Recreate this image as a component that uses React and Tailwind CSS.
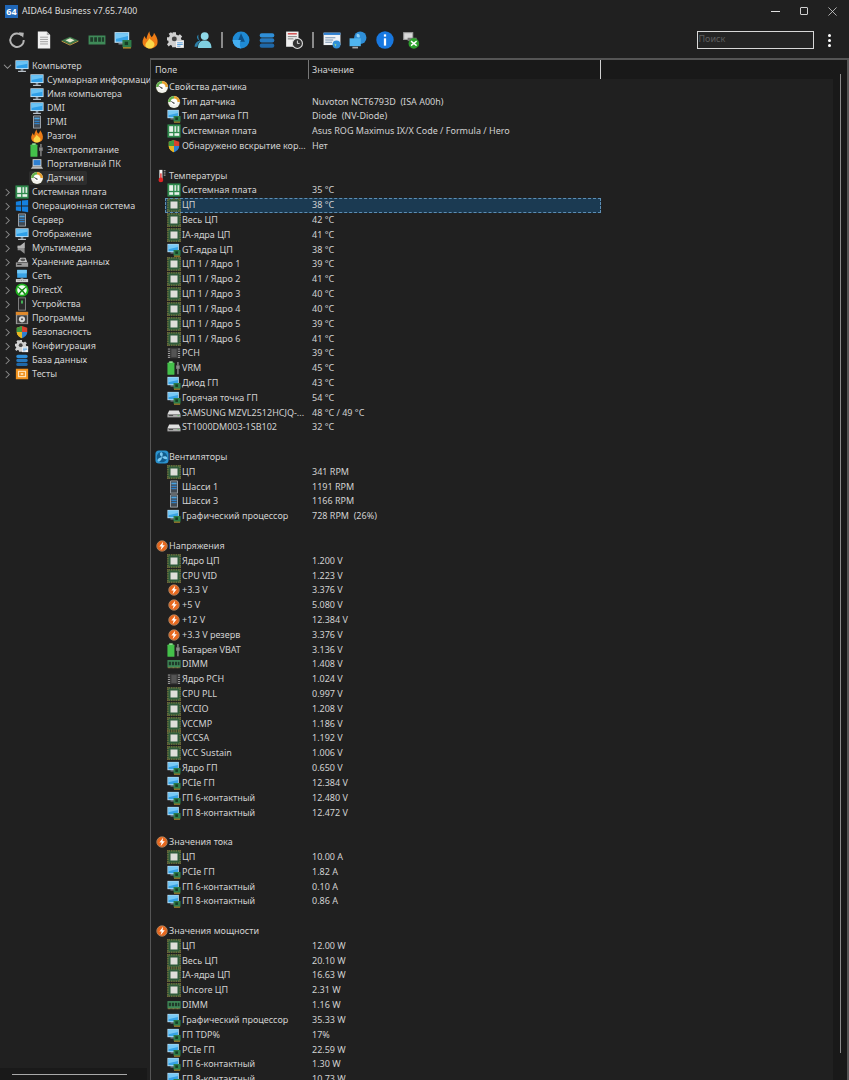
import React from "react";

const S = ({ children, s = 14, className = "" }) => (
  <svg viewBox="0 0 16 16" width={s} height={s} className={`shrink-0 ${className}`}>{children}</svg>
);

const Monitor = ({ s }) => (
  <S s={s}>
    <rect x="0.5" y="1.5" width="15" height="10" fill="#cfe8f8" />
    <rect x="1.5" y="2.5" width="13" height="8" fill="#2f9fe8" />
    <path d="M1.5 2.5h13v3L1.5 8z" fill="#6cc4f5" />
    <rect x="6.5" y="11.5" width="3" height="2" fill="#8a97a3" />
    <rect x="3.5" y="13.5" width="9" height="1.3" fill="#c4ccd4" />
  </S>
);
const Chip = ({ s }) => (
  <S s={s}>
    <rect x="0.500" y="0.500" width="15" height="15" fill="#2f5a3a" />
    <path d="M.5 1h15M.5 15h15M1 .5v15M15 .5v15" stroke="#b89a48" strokeWidth="1" strokeDasharray="1 1" />
    <rect x="4" y="4" width="8" height="8" fill="#dededa" />
  </S>
);
const Mobo = ({ s }) => (
  <S s={s}>
    <rect x="0.500" y="0.500" width="15" height="15" fill="#2f8a4d" />
    <rect x="2.500" y="2.500" width="4.500" height="6.500" fill="#e9f1ea" />
    <rect x="8.500" y="2.500" width="2" height="6.500" fill="#d8e8dc" />
    <rect x="12" y="2.500" width="2" height="6.500" fill="#d8e8dc" />
    <rect x="2.500" y="10.500" width="4.500" height="3" fill="#e9f1ea" />
    <rect x="8.500" y="10.500" width="5.500" height="3" fill="#e9f1ea" />
  </S>
);
const Gpu = ({ s }) => (
  <S s={s}>
    <rect x="0.5" y="1" width="13" height="9.5" fill="#bfe3f8" />
    <rect x="1.5" y="2" width="11" height="7.5" fill="#37a3e6" />
    <path d="M1.500 2h11v2.500L1.500 7z" fill="#78c9f5" />
    <rect x="4" y="10.5" width="5" height="1.5" fill="#7d8a96" />
    <rect x="7.5" y="8" width="8" height="6.5" fill="#2e7d4a" />
    <rect x="9.5" y="9.5" width="3" height="3" fill="#173d25" />
    <rect x="8" y="14.5" width="7" height="1" fill="#d5a92e" />
  </S>
);
const Gauge = ({ s }) => (
  <S s={s}>
    <circle cx="8" cy="8" r="7.500" fill="#3a3a2c" />
    <circle cx="8" cy="8" r="6.800" fill="#f2f2ec" />
    <path d="M8 1.200A6.800 6.800 0 0 1 14.800 8H12A4 4 0 0 0 8 4z" fill="#e9a02c" />
    <path d="M1.200 8A6.800 6.800 0 0 1 8 1.200V4A4 4 0 0 0 4 8z" fill="#63b04a" />
    <circle cx="8" cy="8" r="3.400" fill="#fff" />
    <path d="M3 6l6 3.200-1 1.200z" fill="#333" />
  </S>
);
const Shield = ({ s }) => (
  <S s={s}>
    <path d="M8 1L2 3v5c0 3.500 3 6 6 7z" fill="#e8a820" />
    <path d="M8 1l6 2v5H8z" fill="#d9412e" />
    <path d="M2 3l6-2v7H2z" fill="#3f9a45" />
    <path d="M8 8h6c0 3.500-3 6-6 7z" fill="#2f7fd0" />
    <path d="M2 8h6v7c-3-1-6-3.500-6-7z" fill="#e8b824" />
  </S>
);
const Thermo = ({ s }) => (
  <S s={s}>
    <rect x="5" y="1" width="3.500" height="10.500" fill="#f4f4f4" />
    <rect x="6" y="5" width="1.500" height="7" fill="#e02424" />
    <circle cx="6.700" cy="12.500" r="2.700" fill="#e02424" />
    <path d="M10 2h2M10 4.500h2M10 7h2" stroke="#ddd" strokeWidth="0.900" />
  </S>
);
const Fan = ({ s }) => (
  <S s={s}>
    <rect x="0.500" y="0.500" width="15" height="15" rx="4" fill="#2b93cf" />
    <circle cx="8" cy="8" r="6" fill="#125c8c" />
    <path d="M8 8C5 6 5 3 7 2.500 9 2.500 9.500 5 8 8zM8 8c3-1.500 5.500-1 6 1 0 2-3 2.500-6-1zM8 8c0 3-2 5.500-4 5-2-1-1-4 4-5z" fill="#7cc8f0" />
  </S>
);
const Bolt = ({ s }) => (
  <S s={s}>
    <circle cx="8" cy="8" r="5.600" fill="#e8681e" />
    <circle cx="8" cy="8" r="6" fill="none" stroke="#f4b07a" strokeWidth="0.700" />
    <path d="M9.300 3.200L5 8.500h2.600L6.400 12.800l4.800-5.600H8.600z" fill="#fff" />
  </S>
);
const Battery = ({ s }) => (
  <S s={s}>
    <rect x="0.500" y="1.800" width="8" height="14" rx="0.800" fill="#44c04a" />
    <rect x="2.500" y="0.300" width="4" height="2" fill="#8fd98f" />
    <path d="M12.500 1v4M12.500 9v6" stroke="#9a9a9a" strokeWidth="1.400" />
    <rect x="10.500" y="5" width="4" height="4" fill="#8a8a8a" />
  </S>
);
const Dimm = ({ s }) => (
  <S s={s}>
    <rect x="0.500" y="3.500" width="15" height="8.500" fill="#3f8a58" />
    <path d="M2 5.500h2.500v4H2zM5.500 5.500H8v4H5.500zM9 5.500h2.500v4H9zM12.300 5.500h2v4h-2z" fill="#1f3a2a" />
    <path d="M1 12.300h14" stroke="#d0b050" strokeWidth="0.800" strokeDasharray="1 0.500" />
  </S>
);
const Pch = ({ s }) => (
  <S s={s}>
    <rect x="3.500" y="2" width="9" height="12" fill="#3a3a3a" />
    <path d="M1 3.500h2.500M1 6h2.500M1 8.500h2.500M1 11h2.500M1 13h2.500M12.500 3.500H15M12.500 6H15M12.500 8.500H15M12.500 11H15M12.500 13H15" stroke="#bdbdbd" strokeWidth="1" />
    <rect x="5" y="3.500" width="6" height="9" fill="#545454" />
  </S>
);
const Hdd = ({ s }) => (
  <S s={s}>
    <path d="M2.500 5h11L15.500 9.500H.5z" fill="#e0e0e0" />
    <rect x="0.500" y="9.500" width="15" height="3.500" fill="#a8a8a8" />
    <rect x="2" y="10.500" width="5" height="1" fill="#3c3c3c" />
    <rect x="12" y="10.500" width="2" height="1" fill="#5fc060" />
  </S>
);
const Case = ({ s, blue = true }) => (
  <S s={s}>
    <rect x="3.500" y="0.500" width="9" height="15" rx="1" fill="#a7b0b8" />
    <rect x="4.500" y="1.500" width="7" height="13" fill="#434a52" />
    <rect x="5" y="3" width="6" height="2" fill={blue ? "#4ba3e0" : "#bbb"} />
    <rect x="5" y="6.500" width="6" height="1.500" fill={blue ? "#2f80c8" : "#888"} />
    <rect x="5" y="9" width="6" height="1.500" fill={blue ? "#2f80c8" : "#888"} />
  </S>
);
const Flame = ({ s }) => (
  <S s={s}>
    <path d="M8 15.500C3.500 15.500 .8 12.500 1.500 8.500 2 7 2.500 6 3 4.500c.8 1.200 1 2.200 1.800 2.800C5.200 5 6 2.500 7.500.3c0 2.500 1 4 2 5.200C10.500 4.500 11.500 3 11.500 1.500 13.800 4.500 15.500 8 14.500 11.500c-.7 2.300-3.500 4-6.500 4z" fill="#ee7d16" />
    <path d="M8 15.500c-2.800 0-4.500-1.500-4-3.800C4.500 10 6.500 9 7.500 6.500c1 1.700 4.500 3 4.500 5.500 0 2-2 3.500-4 3.500z" fill="#fbd84a" />
  </S>
);
const Speaker = ({ s }) => (
  <S s={s}>
    <path d="M3 5.500h3L11 1.500v13L6 10.500H3z" fill="#8f8f8f" />
    <path d="M6 5.500L11 1.500v6.500H3V5.500z" fill="#b4b4b4" />
  </S>
);
const Storage = ({ s }) => (
  <S s={s}>
    <path d="M3 8L6 3h6l2 5z" fill="#c8c8c8" />
    <ellipse cx="9" cy="5.500" rx="3" ry="1.500" fill="#5a5a5a" />
    <rect x="1" y="8.500" width="14" height="5" fill="#9a9a9a" />
    <rect x="2.500" y="10" width="5" height="1.500" fill="#333" />
  </S>
);
const Net = ({ s }) => (
  <S s={s}>
    <rect x="2.500" y="1" width="11" height="9" fill="#3aa3e6" />
    <path d="M2.500 1h11v4h-11z" fill="#75c8f5" />
    <rect x="6.500" y="10" width="3" height="1.500" fill="#888" />
    <rect x="1" y="11.500" width="14" height="3.500" fill="#d0d0d0" />
    <path d="M3 13.200h10" stroke="#777" strokeWidth="0.800" strokeDasharray="1 1" />
  </S>
);
const Xbox = ({ s }) => (
  <S s={s}>
    <circle cx="8" cy="8" r="7.500" fill="#1fb41f" />
    <circle cx="8" cy="8" r="5.500" fill="#f0fbf0" />
    <path d="M3.500 4L8 7.500 12.500 4v1.500L9.300 8.500l3.200 4-1.500.800L8 9.800l-3 3.500-1.500-.800 3.200-4-3.200-3z" fill="#118a11" />
  </S>
);
const Device = ({ s }) => (
  <S s={s}>
    <rect x="3.500" y="0.500" width="9" height="15" fill="#8c8c8c" />
    <rect x="4.500" y="1.500" width="7" height="13" fill="#2a2a2a" />
    <rect x="7" y="4" width="2" height="3.500" fill="#46c25a" />
  </S>
);
const Programs = ({ s }) => (
  <S s={s}>
    <rect x="1" y="1" width="14" height="14" fill="#9a9a9a" />
    <rect x="1" y="1" width="14" height="3.500" fill="#e08a2c" />
    <rect x="2.500" y="5" width="11" height="9" fill="#3c3c3c" />
    <circle cx="8" cy="9.500" r="3.500" fill="#d8d8d8" />
    <circle cx="8" cy="9.500" r="1.200" fill="#555" />
  </S>
);
const Config = ({ s }) => (
  <S s={s}>
    <path d="M5 1h3v2l2 1 1.500-1.200 2 2L12.300 6.500l.7 1.500H15v3h-2.500v3.500h-8V13l-1.500-.5-1.500 1.200-1.500-2L1.500 10 1 8.500H0v-3h1.800l.7-1.500L1.500 2.500l2-1.500L5 2.300z" fill="#d0d0d0" />
    <circle cx="6.500" cy="7" r="2.200" fill="#444" />
    <rect x="8" y="9" width="7" height="6" fill="#f2f2f2" />
    <path d="M9 10.500h5M9 12h5M9 13.500h3" stroke="#3a8fd8" strokeWidth="0.700" />
  </S>
);
const Db = ({ s }) => (
  <S s={s}>
    <rect x="1.500" y="2" width="13" height="3.800" rx="1.800" fill="#2f8fd8" />
    <rect x="1.500" y="6.500" width="13" height="3.800" rx="1.800" fill="#2679bf" />
    <rect x="1.500" y="11" width="13" height="3.800" rx="1.800" fill="#1f68a8" />
  </S>
);
const Tests = ({ s }) => (
  <S s={s}>
    <rect x="1" y="2" width="14" height="12" fill="#f0921e" />
    <rect x="4" y="5" width="8" height="6" fill="none" stroke="#fde3b8" strokeWidth="1.300" />
    <rect x="6.500" y="7" width="3" height="2" fill="#fde3b8" />
  </S>
);
const Laptop = ({ s }) => (
  <S s={s}>
    <rect x="3" y="2.500" width="10" height="8" fill="#d8d8d8" />
    <rect x="4" y="3.500" width="8" height="6" fill="#2f7fd0" />
    <path d="M1 13.500L3 10.500h10l2 3z" fill="#bcbcbc" />
  </S>
);
const Windows = ({ s }) => (
  <S s={s}>
    <path d="M1 3l6-1v5.500H1zM8 1.800L15 1v6.500H8zM1 8.500h6V14l-6-1zM8 8.500h7V15l-7-1z" fill="#1581e0" />
  </S>
);
const Ipmi = ({ s }) => <Case s={s} blue={true} />;

const ChevR = () => (
  <svg viewBox="0 0 8 10" width="7" height="9" className="shrink-0"><path d="M2 1l4 4-4 4" fill="none" stroke="#8a8a8a" strokeWidth="1.200" /></svg>
);
const ChevD = () => (
  <svg viewBox="0 0 10 8" width="9" height="7" className="shrink-0"><path d="M1 2l4 4 4-4" fill="none" stroke="#9a9a9a" strokeWidth="1.200" /></svg>
);

const treeChildren = [
  ["Суммарная информаци", Monitor],
  ["Имя компьютера", Monitor],
  ["DMI", Monitor],
  ["IPMI", Ipmi],
  ["Разгон", Flame],
  ["Электропитание", Battery],
  ["Портативный ПК", Laptop],
  ["Датчики", Gauge, true],
];
const treeRoots = [
  ["Системная плата", Mobo],
  ["Операционная система", Windows],
  ["Сервер", Case],
  ["Отображение", Monitor],
  ["Мультимедиа", Speaker],
  ["Хранение данных", Storage],
  ["Сеть", Net],
  ["DirectX", Xbox],
  ["Устройства", Device],
  ["Программы", Programs],
  ["Безопасность", Shield],
  ["Конфигурация", Config],
  ["База данных", Db],
  ["Тесты", Tests],
];

const H = "h";
const rows = [
  [H, "Свойства датчика", Gauge],
  ["Тип датчика", "Nuvoton NCT6793D  (ISA A00h)", Gauge],
  ["Тип датчика ГП", "Diode  (NV-Diode)", Gpu],
  ["Системная плата", "Asus ROG Maximus IX/X Code / Formula / Hero", Mobo],
  ["Обнаружено вскрытие кор...", "Нет", Shield],
  null,
  [H, "Температуры", Thermo],
  ["Системная плата", "35 °C", Mobo],
  ["ЦП", "38 °C", Chip, true],
  ["Весь ЦП", "42 °C", Chip],
  ["IA-ядра ЦП", "41 °C", Chip],
  ["GT-ядра ЦП", "38 °C", Gpu],
  ["ЦП 1 / Ядро 1", "39 °C", Chip],
  ["ЦП 1 / Ядро 2", "41 °C", Chip],
  ["ЦП 1 / Ядро 3", "40 °C", Chip],
  ["ЦП 1 / Ядро 4", "40 °C", Chip],
  ["ЦП 1 / Ядро 5", "39 °C", Chip],
  ["ЦП 1 / Ядро 6", "41 °C", Chip],
  ["PCH", "39 °C", Pch],
  ["VRM", "45 °C", Battery],
  ["Диод ГП", "43 °C", Gpu],
  ["Горячая точка ГП", "54 °C", Gpu],
  ["SAMSUNG MZVL2512HCJQ-...", "48 °C / 49 °C", Hdd],
  ["ST1000DM003-1SB102", "32 °C", Hdd],
  null,
  [H, "Вентиляторы", Fan],
  ["ЦП", "341 RPM", Chip],
  ["Шасси 1", "1191 RPM", Case],
  ["Шасси 3", "1166 RPM", Case],
  ["Графический процессор", "728 RPM  (26%)", Gpu],
  null,
  [H, "Напряжения", Bolt],
  ["Ядро ЦП", "1.200 V", Chip],
  ["CPU VID", "1.223 V", Chip],
  ["+3.3 V", "3.376 V", Bolt],
  ["+5 V", "5.080 V", Bolt],
  ["+12 V", "12.384 V", Bolt],
  ["+3.3 V резерв", "3.376 V", Bolt],
  ["Батарея VBAT", "3.136 V", Battery],
  ["DIMM", "1.408 V", Dimm],
  ["Ядро PCH", "1.024 V", Pch],
  ["CPU PLL", "0.997 V", Chip],
  ["VCCIO", "1.208 V", Chip],
  ["VCCMP", "1.186 V", Chip],
  ["VCCSA", "1.192 V", Chip],
  ["VCC Sustain", "1.006 V", Chip],
  ["Ядро ГП", "0.650 V", Gpu],
  ["PCIe ГП", "12.384 V", Gpu],
  ["ГП 6-контактный", "12.480 V", Gpu],
  ["ГП 8-контактный", "12.472 V", Gpu],
  null,
  [H, "Значения тока", Bolt],
  ["ЦП", "10.00 A", Chip],
  ["PCIe ГП", "1.82 A", Gpu],
  ["ГП 6-контактный", "0.10 A", Gpu],
  ["ГП 8-контактный", "0.86 A", Gpu],
  null,
  [H, "Значения мощности", Bolt],
  ["ЦП", "12.00 W", Chip],
  ["Весь ЦП", "20.10 W", Chip],
  ["IA-ядра ЦП", "16.63 W", Chip],
  ["Uncore ЦП", "2.31 W", Chip],
  ["DIMM", "1.16 W", Dimm],
  ["Графический процессор", "35.33 W", Gpu],
  ["ГП TDP%", "17%", Gpu],
  ["PCIe ГП", "22.59 W", Gpu],
  ["ГП 6-контактный", "1.30 W", Gpu],
  ["ГП 8-контактный", "10.73 W", Gpu],
];

function ListRow({ row }) {
  if (!row) return <div className="h-[14.82px]" />;
  if (row[0] === H) {
    const I = row[2];
    return (
      <div className="h-[14.82px] flex items-center pl-[4px] whitespace-pre">
        <I s={14} />
        <span>{row[1]}</span>
      </div>
    );
  }
  const [f, v, I, sel] = row;
  return (
    <div className={`h-[14.82px] ml-[14px] w-[436px] flex items-center whitespace-pre ${sel ? "bg-[#1b3a52] outline-1 outline-dashed outline-[#5d8fb5] -outline-offset-1" : ""}`}>
      <div className="w-[147px] flex items-center gap-[1px] pl-[2px] overflow-hidden">
        <I s={14} />
        <span>{f}</span>
      </div>
      <span>{v}</span>
    </div>
  );
}

const Sep = () => <div className="w-[2px] h-[16px] bg-[#8a8a8a] mx-[0.5px]" />;

const Doc = () => (
  <S s={18}>
    <path d="M2.500 0.500h8l3 3v12h-11z" fill="#f0f0f0" />
    <path d="M10.500 0.500v3h3z" fill="#aaa" />
    <path d="M4.500 5.500h7M4.500 7.500h7M4.500 9.500h7M4.500 11.500h7" stroke="#999" strokeWidth="0.800" />
  </S>
);
const Refresh = () => (
  <svg viewBox="0 0 16 16" width="18" height="18" className="shrink-0">
    <path d="M12.500 4.200A6 6 0 1 0 14 8" fill="none" stroke="#b5b5b5" strokeWidth="1.700" />
    <path d="M9.500 1l4.500 0.500-.5 4.500z" fill="#b5b5b5" />
  </svg>
);
const ChipFlat = () => (
  <S s={18}>
    <path d="M0.500 8.500L8 5l7.500 3.500L8 12z" fill="#3f7a4a" />
    <path d="M4 8.300L8 6.500l4 1.800L8 10.200z" fill="#e8e8d0" />
    <path d="M.5 9L8 12.500 15.500 9" fill="none" stroke="#c9a64a" strokeWidth="0.800" />
  </S>
);
const Person = () => (
  <S s={18}>
    <circle cx="9.500" cy="4.500" r="3.500" fill="#8fd8e8" />
    <path d="M3.500 15c0-5 3-6.500 6-6.500s6 1.500 6 6.500z" fill="#7fcfe0" />
    <path d="M4 3a3 3 0 0 0 1 5.500C2 9.500 .5 11.500.5 14H3c.3-3 1.500-4 3-5-2-1-2.500-4-2-6z" fill="#2b7fa8" />
  </S>
);
const Pie = () => (
  <S s={18}>
    <circle cx="8" cy="8" r="7.500" fill="#1f8ad4" />
    <path d="M8 2l3.500 7.500H5z" fill="#0e4f85" />
    <path d="M8 8a7.500 7.500 0 0 0 0 7.500A7.500 7.500 0 0 1 .5 8z" fill="#45aef0" />
  </S>
);
const ReportClock = () => (
  <S s={18}>
    <rect x="1" y="0.500" width="11" height="13.500" fill="#f0f0f0" />
    <path d="M2.500 2.500h8" stroke="#d04040" strokeWidth="1.200" />
    <path d="M2.500 5h8M2.500 7h5" stroke="#777" strokeWidth="0.800" />
    <circle cx="11" cy="11" r="4.500" fill="#333" stroke="#ddd" strokeWidth="1" />
    <path d="M11 8.500V11h2" stroke="#eee" strokeWidth="0.800" fill="none" />
  </S>
);
const WebReport = () => (
  <S s={18}>
    <rect x="0.500" y="1.500" width="15" height="11" fill="#eef2f6" />
    <rect x="0.500" y="1.500" width="15" height="2" fill="#2f7fd0" />
    <path d="M2 6h9M2 8h7M2 10h6" stroke="#6a88a8" strokeWidth="0.800" />
    <circle cx="12" cy="12" r="3.500" fill="#2f8fd8" />
    <path d="M10 11l2 1-1 2z" fill="#8ed18e" />
  </S>
);
const GlobePc = () => (
  <S s={18}>
    <circle cx="10" cy="6" r="5.500" fill="#2f8fd8" />
    <path d="M7 2.500c2 0 3 1 2.500 3-2 .500-3.500 0-2.500-3z" fill="#8ed1f5" />
    <rect x="0.500" y="6.500" width="10" height="7" fill="#4fb4ee" />
    <rect x="3" y="14" width="5" height="1.500" fill="#aaa" />
  </S>
);
const Info = () => (
  <S s={18}>
    <circle cx="8" cy="8" r="7.700" fill="#1878e0" />
    <rect x="7" y="6.500" width="2" height="6.500" fill="#fff" />
    <rect x="7" y="3" width="2" height="2" fill="#fff" />
  </S>
);
const Update = () => (
  <S s={18}>
    <rect x="1" y="1" width="9" height="7" fill="#a0a0a0" />
    <rect x="2" y="2" width="7" height="5" fill="#d8d8d8" />
    <rect x="5" y="6" width="8" height="3" fill="#777" />
    <circle cx="10.500" cy="11" r="4.700" fill="#2ca02c" />
    <path d="M8 9l5 4M13 9l-5 4" stroke="#fff" strokeWidth="1.200" />
  </S>
);

export default function App() {
  return (
    <div className="h-[1080px] w-[849px] overflow-hidden flex flex-col bg-[#202020] text-[#d2d2d2] text-[9px] leading-[14px] font-['Noto_Sans','Liberation_Sans',sans-serif]">
      {/* Title bar */}
      <div className="h-[22px] shrink-0 flex items-center pl-[5px] text-[#dcdcdc] text-[8.750px]">
        <div className="w-[13px] h-[13px] bg-[#2067b8] text-white text-[9px] leading-[13px] font-bold text-center mr-[4px]">64</div>
        <span>AIDA64 Business v7.65.7400</span>
        <div className="ml-auto flex items-center gap-[20px] pr-[12px]">
          <div className="w-[9px] h-[1px] bg-[#e0e0e0]" />
          <div className="w-[8px] h-[8px] border border-[#d0d0d0] rounded-[1px]" />
          <svg viewBox="0 0 10 10" width="9" height="9"><path d="M.5.500l9 9M9.500.500l-9 9" stroke="#d0d0d0" strokeWidth="0.900" /></svg>
        </div>
      </div>
      {/* Toolbar */}
      <div className="h-[36px] shrink-0 flex items-center pl-[8px] pr-[18px] gap-[8.500px]">
        <Refresh />
        <Doc />
        <ChipFlat />
        <S s={18}><rect x="0.500" y="4" width="15" height="8" fill="#3f8a58" /><path d="M2 5.500h2.500v4H2zM5.500 5.500H8v4H5.500zM9 5.500h2.500v4H9zM12.300 5.500h2v4h-2z" fill="#1f3a2a" /></S>
        <Gpu s={18} />
        <Flame s={18} />
        <Config s={18} />
        <Person />
        <Sep />
        <Pie />
        <Db s={18} />
        <ReportClock />
        <Sep />
        <WebReport />
        <GlobePc />
        <Info />
        <Update />
        <div className="ml-auto w-[117px] h-[18px] border-[1.500px] border-[#d8d8d8] bg-[#242424] text-[#5e5e5e] leading-[14px] pl-[1px]">Поиск</div>
        <div className="ml-[6px] flex flex-col gap-[2px]">
          <div className="w-[3px] h-[3px] rounded-full bg-white" />
          <div className="w-[3px] h-[3px] rounded-full bg-white" />
          <div className="w-[3px] h-[3px] rounded-full bg-white" />
        </div>
      </div>
      {/* Body */}
      <div className="flex-1 flex min-h-0">
        {/* Tree */}
        <div className="w-[150px] shrink-0 flex flex-col">
          <div className="flex-1 pt-[1px] overflow-hidden whitespace-pre">
            <div className="h-[14px] flex items-center pl-[3px]">
              <ChevD />
              <span className="ml-[3px]"><Monitor s={14} /></span>
              <span className="ml-[3px]">Компьютер</span>
            </div>
            {treeChildren.map(([t, I, sel]) => (
              <div key={t} className="h-[14px] flex items-center pl-[30px]">
                <div className={`flex items-center h-[14px] pr-[3px] rounded-[2px] ${sel ? "bg-[#2d2d2d] -ml-[1px] pl-[1px]" : ""}`}>
                  <I s={14} />
                  <span className="ml-[3px]">{t}</span>
                </div>
              </div>
            ))}
            {treeRoots.map(([t, I]) => (
              <div key={t} className="h-[14px] flex items-center pl-[4px]">
                <ChevR />
                <span className="ml-[4px]"><I s={14} /></span>
                <span className="ml-[3px]">{t}</span>
              </div>
            ))}
          </div>
          <div className="h-[12px] bg-[#191919] pl-[12px] pt-[6px] mr-[3px]">
            <div className="w-[115px] h-[1px] bg-[#a8a8a8]" />
          </div>
        </div>
        {/* List */}
        <div className="flex-1 min-w-0 flex border-t-[2px] border-l-[1px] border-r-[2px] border-[#555555]">
          <div className="flex-1 min-w-0 flex flex-col">
            <div className="h-[19.300px] shrink-0 bg-[#191919] flex items-center">
              <div className="w-[157px] h-full pl-[4px] flex items-center">Поле</div>
              <div className="w-[1px] h-full bg-[#777777]" />
              <div className="w-[291px] h-full pl-[3px] flex items-center">Значение</div>
              <div className="w-[1px] h-full bg-[#d0d0d0]" />
            </div>
            <div className="flex-1 overflow-hidden">
              {rows.map((r, i) => <ListRow key={i} row={r} />)}
            </div>
          </div>
          <div className="w-[14px] shrink-0 bg-[#191919] pt-[14px] pl-[7px]">
            <div className="w-[1px] h-[979px] bg-[#8a8a8a]" />
          </div>
        </div>
      </div>
    </div>
  );
}
